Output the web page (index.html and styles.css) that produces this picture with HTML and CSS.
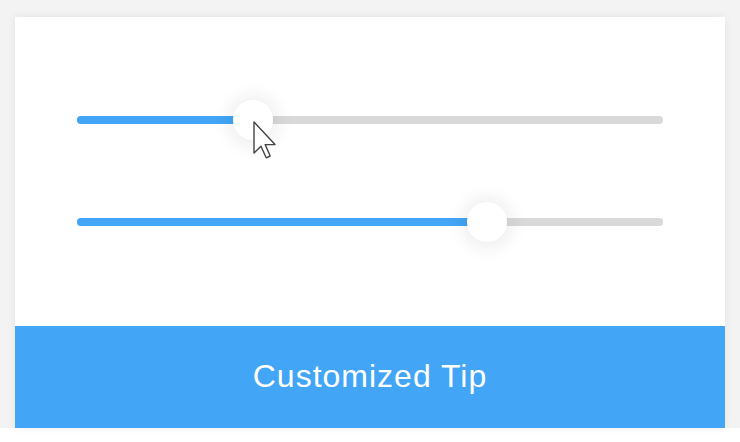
FILE: index.html
```html
<!DOCTYPE html>
<html lang="en">
<head>
<meta charset="utf-8">
<title>Customized Tip</title>
<link rel="stylesheet" href="styles.css">
</head>
<body>
<div class="frame">
  <div class="card">
    <div class="sliders">
      <div class="slider">
        <div class="track">
          <div class="fill" style="width:30%"></div>
          <div class="knob" style="left:30%"></div>
        </div>
      </div>
      <div class="slider">
        <div class="track">
          <div class="fill" style="width:70%"></div>
          <div class="knob" style="left:70%"></div>
        </div>
      </div>
    </div>
    <div class="band">Customized Tip</div>
  </div>
  <svg class="cursor" width="24" height="38" viewBox="0 0 12 19" aria-hidden="true">
    <path d="M0.5 0.5 L0.5 16 L4 12.6 L6.6 18.4 L8.6 17.5 L6.1 11.8 L11 11.8 Z" fill="#fff" stroke="#444" stroke-width="0.7" stroke-linejoin="round"/>
  </svg>
</div>
</body>
</html>
```
FILE: styles.css
```css
html, body {
  margin: 0;
  padding: 0;
  background: #ffffff;
}
.frame {
  position: relative;
  width: 740px;
  height: 442px;
  padding: 17px 15px 14px 15px;
  box-sizing: border-box;
  background: linear-gradient(#f3f3f3, #f3f3f3) no-repeat;
  background-size: 100% 428px;
}
.card {
  width: 710px;
  height: 411px;
  background: #ffffff;
  box-shadow: 0 0 8px rgba(0, 0, 0, 0.07);
  display: flex;
  flex-direction: column;
}
.sliders {
  flex: 1;
  display: flex;
  flex-direction: column;
  gap: 62px;
  padding: 83px 62px 0 62px;
}
.slider {
  height: 40px;
  display: flex;
  align-items: center;
}
.track {
  position: relative;
  width: 586px;
  height: 8px;
  border-radius: 4px;
  background: #d9d9d9;
}
.fill {
  height: 8px;
  border-radius: 4px;
  background: #42a5f5;
}
.knob {
  position: absolute;
  top: 50%;
  width: 40px;
  height: 40px;
  margin: -20px 0 0 -20px;
  border-radius: 50%;
  background: #ffffff;
  box-shadow: 0 1px 16px 7px rgba(0, 0, 0, 0.06);
}
.band {
  height: 102px;
  background: #42a5f5;
  color: #ffffff;
  font-family: "Liberation Sans", Arial, sans-serif;
  font-size: 32px;
  letter-spacing: 1px;
  display: flex;
  align-items: center;
  justify-content: center;
  padding-bottom: 2px;
  box-sizing: border-box;
}
.cursor {
  position: absolute;
  left: 253px;
  top: 121px;
}
```
